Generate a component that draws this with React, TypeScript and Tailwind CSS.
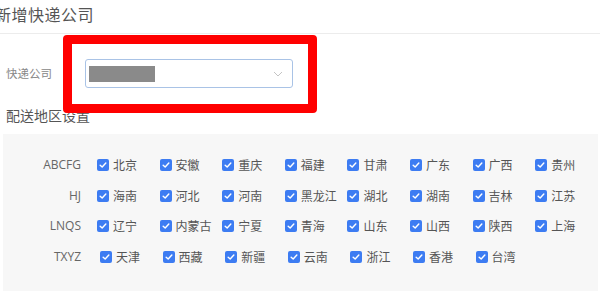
import React from "react";

const rows: { key: string; shift?: boolean; items: string[]; more?: boolean }[] = [
  { key: "ABCFG", more: true, items: ["北京", "安徽", "重庆", "福建", "甘肃", "广东", "广西", "贵州"] },
  { key: "HJ", more: true, items: ["海南", "河北", "河南", "黑龙江", "湖北", "湖南", "吉林", "江苏"] },
  { key: "LNQS", more: true, items: ["辽宁", "内蒙古", "宁夏", "青海", "山东", "山西", "陕西", "上海"] },
  { key: "TXYZ", shift: true, items: ["天津", "西藏", "新疆", "云南", "浙江", "香港", "台湾"] },
];

function Check() {
  return (
    <span className="flex h-[12px] w-[12px] shrink-0 items-center justify-center rounded-[2px] bg-[#3d7cf2]">
      <svg viewBox="0 0 12 12" className="h-[10px] w-[10px]">
        <path d="M2.6 6.2 L5 8.4 L9.4 3.6" fill="none" stroke="white" strokeWidth="1.7" strokeLinecap="round" strokeLinejoin="round" />
      </svg>
    </span>
  );
}

export default function App() {
  return (
    <div
      className="relative h-[291px] w-[600px] overflow-hidden bg-white"
      style={{ fontFamily: '"Noto Sans CJK SC", "Noto Sans", sans-serif' }}
    >
      {/* header */}
      <div className="flex h-[34px] items-center border-b border-[#ececec]">
        <span className="-ml-[5px] -mt-[5px] text-[16px] tracking-[0.5px] text-[#555]">新增快递公司</span>
      </div>

      {/* company select */}
      <div className="mt-[25px] flex items-center">
        <span className="w-[85px] pl-[6px] text-[11.5px] text-[#888]">快递公司</span>
        <div className="flex h-[29px] w-[208px] items-center justify-between rounded-[3px] border border-[#a9c3e6] pl-[3px] pr-[9px]">
          <span className="h-[16px] w-[66px] bg-[#8a8a8a]" />
          <svg viewBox="0 0 10 6" className="h-[6px] w-[10px]">
            <path d="M1 1 L5 5 L9 1" fill="none" stroke="#c4c4c4" strokeWidth="1" />
          </svg>
        </div>
      </div>

      <div className="mt-[17px] pl-[6px] text-[14px] leading-[20px] text-[#555]">配送地区设置</div>

      {/* area panel */}
      <div className="ml-[3px] mt-[9px] h-[160px] w-[595px] overflow-hidden bg-[#f7f7f7] pt-[16px]">
        {rows.map((row) => (
          <div key={row.key} className="flex h-[30.5px] items-center">
            <span
              className={
                "w-[78px] shrink-0 text-right text-[12px] text-[#666] " + (row.shift ? "mr-[19px]" : "mr-[16px]")
              }
              style={{ fontFamily: '"Open Sans", "Liberation Sans", sans-serif' }}
            >
              {row.key}
            </span>
            {row.items.map((name) => (
              <div key={name} className="flex w-[62.6px] shrink-0 items-center gap-[4px]">
                <Check />
                <span className="whitespace-nowrap text-[12px] text-[#555]">{name}</span>
              </div>
            ))}
            {row.more && <Check />}
          </div>
        ))}
      </div>

      {/* red annotation box */}
      <div className="absolute left-[63px] top-[35px] h-[78px] w-[254px] rounded-[4px] border-[9px] border-[#f00]" />
    </div>
  );
}
